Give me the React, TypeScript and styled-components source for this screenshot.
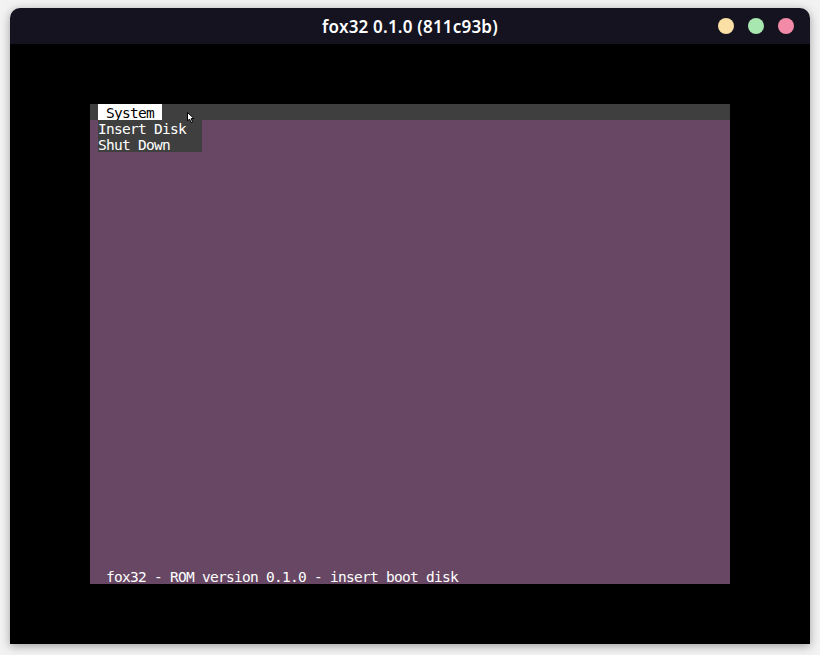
import styled, { createGlobalStyle } from 'styled-components';

const GlobalStyle = createGlobalStyle`
  html, body {
    margin: 0;
    padding: 0;
    background: #f2f2f2;
  }
`;

const Desktop = styled.div`
  width: 820px;
  height: 655px;
  padding: 8px 10px 0;
  box-sizing: border-box;
  overflow: hidden;
`;

const Window = styled.div`
  width: 800px;
  height: 636px;
  display: flex;
  flex-direction: column;
  border-radius: 10px 10px 0 0;
  overflow: hidden;
  box-shadow: 0 2px 10px rgba(0, 0, 0, 0.35);
`;

const TitleBar = styled.div`
  height: 36px;
  flex-shrink: 0;
  background: #14131f;
  display: flex;
  align-items: center;
  justify-content: center;
  position: relative;
`;

const Title = styled.span`
  font-family: 'Noto Sans', 'Open Sans', sans-serif;
  font-size: 17px;
  font-weight: 600;
  color: #ffffff;
  letter-spacing: 0.2px;
`;

const Controls = styled.div`
  position: absolute;
  right: 16px;
  top: 10px;
  display: flex;
  gap: 14px;
`;

const Dot = styled.span<{ $color: string }>`
  width: 16px;
  height: 16px;
  border-radius: 50%;
  background: ${({ $color }) => $color};
`;

const Content = styled.div`
  flex: 1;
  background: #000000;
  display: flex;
  align-items: center;
  justify-content: center;
`;

const Screen = styled.div`
  width: 640px;
  height: 480px;
  background: #674764;
  display: flex;
  flex-direction: column;
  position: relative;
  font-family: 'DejaVu Sans Mono', 'Liberation Mono', monospace;
  font-size: 14.5px;
  letter-spacing: -0.73px;
  line-height: 18px;
  color: #ffffff;
`;

const MenuBar = styled.div`
  height: 16px;
  background: #3f3f3f;
  display: flex;
  padding-left: 8px;
`;

const MenuItem = styled.span<{ $active?: boolean }>`
  height: 16px;
  overflow: hidden;
  white-space: pre;
  background: ${({ $active }) => ($active ? '#ffffff' : 'transparent')};
  color: ${({ $active }) => ($active ? '#000000' : '#ffffff')};
`;

const Dropdown = styled.div`
  position: absolute;
  left: 8px;
  top: 16px;
  width: 104px;
  background: #3f3f3f;
  display: flex;
  flex-direction: column;
`;

const DropItem = styled.span`
  height: 16px;
  overflow: hidden;
  white-space: pre;
`;

const Body = styled.div`
  flex: 1;
`;

const StatusLine = styled.div`
  height: 16px;
  overflow: hidden;
  padding-left: 16px;
  white-space: pre;
`;

const Cursor = styled.svg`
  position: absolute;
  left: 97px;
  top: 8px;
`;

export default function App() {
  return (
    <>
      <GlobalStyle />
      <Desktop>
        <Window>
          <TitleBar>
            <Title>fox32 0.1.0 (811c93b)</Title>
            <Controls>
              <Dot $color="#fbe0a6" />
              <Dot $color="#a9e7b1" />
              <Dot $color="#f38ba8" />
            </Controls>
          </TitleBar>
          <Content>
            <Screen>
              <MenuBar>
                <MenuItem $active>{' System '}</MenuItem>
              </MenuBar>
              <Dropdown>
                <DropItem>Insert Disk</DropItem>
                <DropItem>Shut Down</DropItem>
              </Dropdown>
              <Body />
              <StatusLine>fox32 - ROM version 0.1.0 - insert boot disk</StatusLine>
              <Cursor width="8" height="11" viewBox="0 0 8 11">
                <path d="M0.5 0.5 L0.5 9 L2.5 7 L4 10.5 L5.5 10 L4.2 6.5 L7 6.5 Z" fill="#ffffff" stroke="#000000" strokeWidth="1" />
              </Cursor>
            </Screen>
          </Content>
        </Window>
      </Desktop>
    </>
  );
}
